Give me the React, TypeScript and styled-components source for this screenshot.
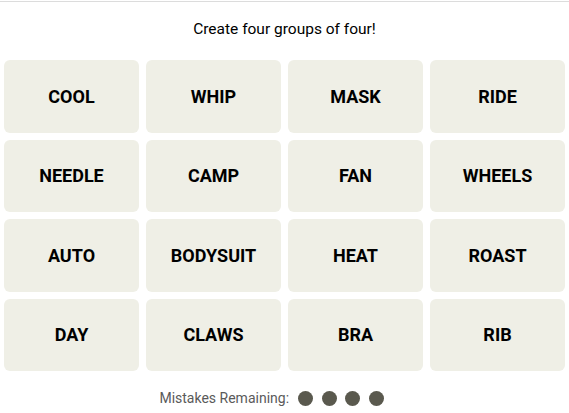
import styled, { createGlobalStyle } from "styled-components";

const GlobalStyle = createGlobalStyle`
  body {
    margin: 0;
    background: #ffffff;
    font-family: Roboto, "Liberation Sans", sans-serif;
  }
`;

const words = [
  "COOL", "WHIP", "MASK", "RIDE",
  "NEEDLE", "CAMP", "FAN", "WHEELS",
  "AUTO", "BODYSUIT", "HEAT", "ROAST",
  "DAY", "CLAWS", "BRA", "RIB",
];

const Page = styled.div`
  width: 569px;
  padding-top: 1px;
`;

const Divider = styled.div`
  height: 1px;
  background: #dcdcdc;
`;

const Prompt = styled.div`
  margin-top: 17px;
  height: 21px;
  line-height: 21px;
  text-align: center;
  font-size: 15.5px;
  color: #000000;
`;

const Board = styled.div`
  margin: 20px 0 0 4px;
  width: 561px;
  display: grid;
  grid-template-columns: repeat(4, 1fr);
  grid-auto-rows: 72.5px;
  gap: 7px;
`;

const Tile = styled.div`
  background: #efefe6;
  border-radius: 6px;
  display: flex;
  align-items: center;
  justify-content: center;
  font-size: 18px;
  font-weight: 700;
  color: #000000;
`;

const Mistakes = styled.div`
  margin-top: 17px;
  height: 20px;
  display: flex;
  align-items: center;
  justify-content: center;
  padding-right: 26px;
  gap: 9px;
`;

const MistakesLabel = styled.span`
  font-size: 14px;
  color: #5a5a5a;
`;

const Dots = styled.div`
  display: flex;
  gap: 8.5px;
`;

const Dot = styled.span`
  width: 15px;
  height: 15px;
  border-radius: 50%;
  background: #5a594e;
`;

export default function App() {
  return (
    <Page>
      <GlobalStyle />
      <Divider />
      <Prompt>Create four groups of four!</Prompt>
      <Board>
        {words.map((w) => (
          <Tile key={w}>{w}</Tile>
        ))}
      </Board>
      <Mistakes>
        <MistakesLabel>Mistakes Remaining:</MistakesLabel>
        <Dots>
          {[0, 1, 2, 3].map((i) => (
            <Dot key={i} />
          ))}
        </Dots>
      </Mistakes>
    </Page>
  );
}
